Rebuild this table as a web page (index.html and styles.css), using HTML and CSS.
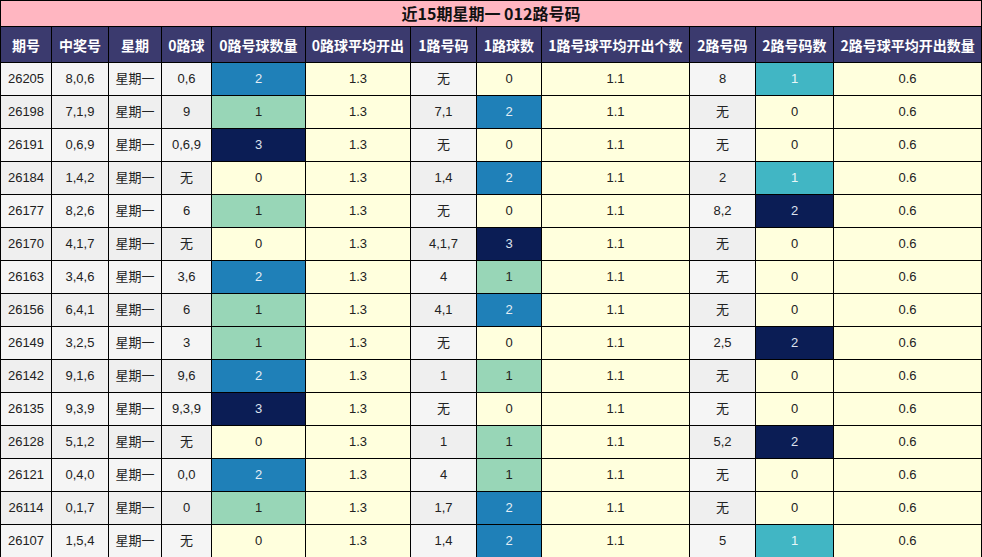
FILE: index.html
```html
<!DOCTYPE html>
<html lang="zh">
<head>
<meta charset="utf-8">
<title>近15期星期一 012路号码</title>
<link rel="stylesheet" href="styles.css">
</head>
<body>
<table class="grid">
<colgroup>
<col class="w51"><col class="w57"><col class="w53"><col class="w50"><col class="w94"><col class="w105"><col class="w66"><col class="w65"><col class="w148"><col class="w66"><col class="w78"><col class="w148">
</colgroup>
<thead>
<tr class="title-row"><th colspan="12">近15期星期一 012路号码</th></tr>
<tr class="head-row"><th>期号</th><th>中奖号</th><th>星期</th><th>0路球</th><th>0路号球数量</th><th>0路球平均开出</th><th>1路号码</th><th>1路球数</th><th>1路号球平均开出个数</th><th>2路号码</th><th>2路号码数</th><th>2路号球平均开出数量</th></tr>
</thead>
<tbody>
<tr><td class="g">26205</td><td class="g">8,0,6</td><td class="g">星期一</td><td class="g">0,6</td><td class="c2">2</td><td class="y">1.3</td><td class="g">无</td><td class="y">0</td><td class="y">1.1</td><td class="g">8</td><td class="t1">1</td><td class="y">0.6</td></tr>
<tr><td class="g">26198</td><td class="g">7,1,9</td><td class="g">星期一</td><td class="g">9</td><td class="c1">1</td><td class="y">1.3</td><td class="g">7,1</td><td class="c2">2</td><td class="y">1.1</td><td class="g">无</td><td class="y">0</td><td class="y">0.6</td></tr>
<tr><td class="g">26191</td><td class="g">0,6,9</td><td class="g">星期一</td><td class="g">0,6,9</td><td class="c3">3</td><td class="y">1.3</td><td class="g">无</td><td class="y">0</td><td class="y">1.1</td><td class="g">无</td><td class="y">0</td><td class="y">0.6</td></tr>
<tr><td class="g">26184</td><td class="g">1,4,2</td><td class="g">星期一</td><td class="g">无</td><td class="y">0</td><td class="y">1.3</td><td class="g">1,4</td><td class="c2">2</td><td class="y">1.1</td><td class="g">2</td><td class="t1">1</td><td class="y">0.6</td></tr>
<tr><td class="g">26177</td><td class="g">8,2,6</td><td class="g">星期一</td><td class="g">6</td><td class="c1">1</td><td class="y">1.3</td><td class="g">无</td><td class="y">0</td><td class="y">1.1</td><td class="g">8,2</td><td class="c3">2</td><td class="y">0.6</td></tr>
<tr><td class="g">26170</td><td class="g">4,1,7</td><td class="g">星期一</td><td class="g">无</td><td class="y">0</td><td class="y">1.3</td><td class="g">4,1,7</td><td class="c3">3</td><td class="y">1.1</td><td class="g">无</td><td class="y">0</td><td class="y">0.6</td></tr>
<tr><td class="g">26163</td><td class="g">3,4,6</td><td class="g">星期一</td><td class="g">3,6</td><td class="c2">2</td><td class="y">1.3</td><td class="g">4</td><td class="c1">1</td><td class="y">1.1</td><td class="g">无</td><td class="y">0</td><td class="y">0.6</td></tr>
<tr><td class="g">26156</td><td class="g">6,4,1</td><td class="g">星期一</td><td class="g">6</td><td class="c1">1</td><td class="y">1.3</td><td class="g">4,1</td><td class="c2">2</td><td class="y">1.1</td><td class="g">无</td><td class="y">0</td><td class="y">0.6</td></tr>
<tr><td class="g">26149</td><td class="g">3,2,5</td><td class="g">星期一</td><td class="g">3</td><td class="c1">1</td><td class="y">1.3</td><td class="g">无</td><td class="y">0</td><td class="y">1.1</td><td class="g">2,5</td><td class="c3">2</td><td class="y">0.6</td></tr>
<tr><td class="g">26142</td><td class="g">9,1,6</td><td class="g">星期一</td><td class="g">9,6</td><td class="c2">2</td><td class="y">1.3</td><td class="g">1</td><td class="c1">1</td><td class="y">1.1</td><td class="g">无</td><td class="y">0</td><td class="y">0.6</td></tr>
<tr><td class="g">26135</td><td class="g">9,3,9</td><td class="g">星期一</td><td class="g">9,3,9</td><td class="c3">3</td><td class="y">1.3</td><td class="g">无</td><td class="y">0</td><td class="y">1.1</td><td class="g">无</td><td class="y">0</td><td class="y">0.6</td></tr>
<tr><td class="g">26128</td><td class="g">5,1,2</td><td class="g">星期一</td><td class="g">无</td><td class="y">0</td><td class="y">1.3</td><td class="g">1</td><td class="c1">1</td><td class="y">1.1</td><td class="g">5,2</td><td class="c3">2</td><td class="y">0.6</td></tr>
<tr><td class="g">26121</td><td class="g">0,4,0</td><td class="g">星期一</td><td class="g">0,0</td><td class="c2">2</td><td class="y">1.3</td><td class="g">4</td><td class="c1">1</td><td class="y">1.1</td><td class="g">无</td><td class="y">0</td><td class="y">0.6</td></tr>
<tr><td class="g">26114</td><td class="g">0,1,7</td><td class="g">星期一</td><td class="g">0</td><td class="c1">1</td><td class="y">1.3</td><td class="g">1,7</td><td class="c2">2</td><td class="y">1.1</td><td class="g">无</td><td class="y">0</td><td class="y">0.6</td></tr>
<tr><td class="g">26107</td><td class="g">1,5,4</td><td class="g">星期一</td><td class="g">无</td><td class="y">0</td><td class="y">1.3</td><td class="g">1,4</td><td class="c2">2</td><td class="y">1.1</td><td class="g">5</td><td class="t1">1</td><td class="y">0.6</td></tr>
</tbody>
</table>
</body>
</html>
```
FILE: styles.css
```css
html, body {
  margin: 0;
  padding: 0;
  background: #ffffff;
}
.grid {
  border-collapse: collapse;
  table-layout: fixed;
  width: 981px;
  font-family: "Liberation Sans", "Noto Sans CJK SC", sans-serif;
  font-size: 13px;
  color: #222;
}
.w51 { width: 51px; }
.w57 { width: 57px; }
.w53 { width: 53px; }
.w50 { width: 50px; }
.w94 { width: 94px; }
.w105 { width: 105px; }
.w66 { width: 66px; }
.w65 { width: 65px; }
.w148 { width: 148px; }
.w78 { width: 78px; }
.grid th, .grid td {
  border: 1px solid #000;
  padding: 0;
  text-align: center;
  white-space: nowrap;
  overflow: hidden;
}
.title-row th {
  height: 25px;
  background: #ffb6c1;
  font-family: "Noto Sans CJK SC", "Liberation Sans", sans-serif;
  font-size: 16px;
  font-weight: bold;
  color: #111;
  line-height: 25px;
}
.head-row th {
  height: 35px;
  background: #3b3a6e;
  color: #ffffff;
  font-family: "Noto Sans CJK SC", "Liberation Sans", sans-serif;
  font-size: 14px;
  font-weight: bold;
  line-height: 20px;
}
.grid td {
  height: 32px;
  line-height: 20px;
}
.g { background: #f5f5f5; }
tbody tr:nth-child(even) .g { background: #efefef; }
.y { background: #ffffdd; }
.c1 { background: #98d6b7; color: #222; }
.c2 { background: #1f80b8; color: #e6eef5; }
.c3 { background: #0b1d55; color: #dde3ee; }
.t1 { background: #41b6c4; color: #e8f6f8; }
```
